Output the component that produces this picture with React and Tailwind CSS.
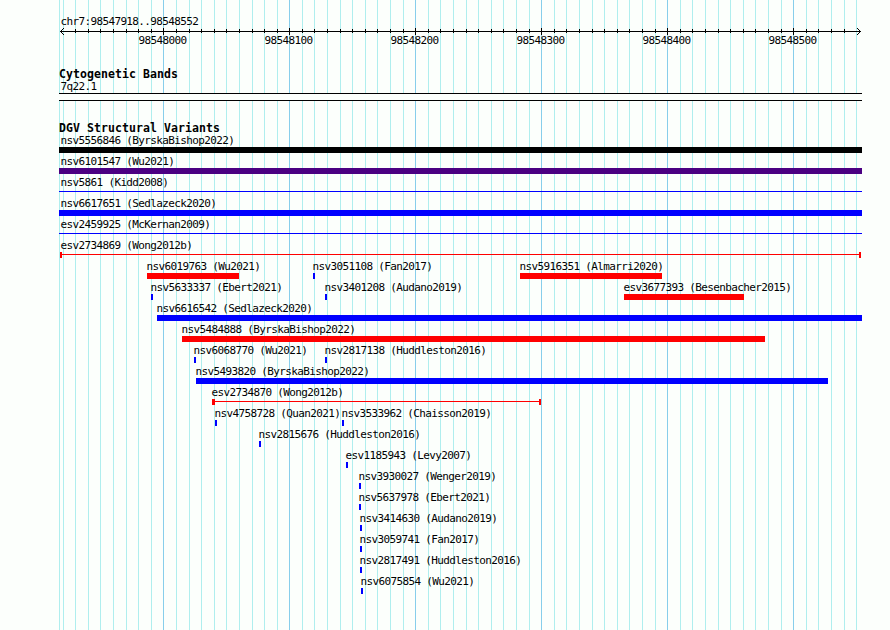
import React from "react";

const START = 59;
const END = 862;

const minorLines = [
    59, 63, 75, 88, 100, 113, 126, 138, 151, 176, 189, 201, 214, 226, 239, 252, 264, 277,
    302, 314, 327, 340, 352, 365, 377, 390, 403, 428, 440, 453, 466, 478, 491, 503, 516, 529,
    554, 566, 579, 592, 604, 617, 629, 642, 655, 680, 692, 705, 718, 730, 743, 755, 768, 781,
    806, 818, 831, 844, 856,
];

const majorLines = [
    { x: 163, label: "98548000" },
    { x: 289, label: "98548100" },
    { x: 415, label: "98548200" },
    { x: 541, label: "98548300" },
    { x: 667, label: "98548400" },
    { x: 793, label: "98548500" },
];

const rows = [
    [{ name: "nsv5556846 (ByrskaBishop2022)", from: 59, to: 862, color: "bg-black", labelX: 61 }],
    [{ name: "nsv6101547 (Wu2021)", from: 59, to: 862, color: "bg-[#4b0082]", labelX: 61 }],
    [{ name: "nsv5861 (Kidd2008)", from: 59, to: 862, color: "bg-[#0000ff]", type: "line", labelX: 61 }],
    [{ name: "nsv6617651 (Sedlazeck2020)", from: 59, to: 862, color: "bg-[#0000ff]", labelX: 61 }],
    [{ name: "esv2459925 (McKernan2009)", from: 59, to: 862, color: "bg-[#0000ff]", type: "line", labelX: 61 }],
    [{ name: "esv2734869 (Wong2012b)", from: 60, to: 861, color: "bg-[#ff0000]", type: "span", labelX: 61 }],
    [
        { name: "nsv6019763 (Wu2021)", from: 147, to: 239, color: "bg-[#ff0000]" },
        { name: "nsv3051108 (Fan2017)", from: 313, to: 315, color: "bg-[#0000ff]" },
        { name: "nsv5916351 (Almarri2020)", from: 520, to: 662, color: "bg-[#ff0000]" },
    ],
    [
        { name: "nsv5633337 (Ebert2021)", from: 151, to: 153, color: "bg-[#0000ff]" },
        { name: "nsv3401208 (Audano2019)", from: 325, to: 327, color: "bg-[#0000ff]" },
        { name: "esv3677393 (Besenbacher2015)", from: 624, to: 744, color: "bg-[#ff0000]" },
    ],
    [{ name: "nsv6616542 (Sedlazeck2020)", from: 157, to: 862, color: "bg-[#0000ff]" }],
    [{ name: "nsv5484888 (ByrskaBishop2022)", from: 182, to: 765, color: "bg-[#ff0000]" }],
    [
        { name: "nsv6068770 (Wu2021)", from: 194, to: 196, color: "bg-[#0000ff]" },
        { name: "nsv2817138 (Huddleston2016)", from: 325, to: 327, color: "bg-[#0000ff]" },
    ],
    [{ name: "nsv5493820 (ByrskaBishop2022)", from: 196, to: 828, color: "bg-[#0000ff]" }],
    [{ name: "esv2734870 (Wong2012b)", from: 212, to: 541, color: "bg-[#ff0000]", type: "span", capWidth: 3 }],
    [
        { name: "nsv4758728 (Quan2021)", from: 215, to: 217, color: "bg-[#0000ff]" },
        { name: "nsv3533962 (Chaisson2019)", from: 342, to: 344, color: "bg-[#0000ff]" },
    ],
    [{ name: "nsv2815676 (Huddleston2016)", from: 259, to: 261, color: "bg-[#0000ff]" }],
    [{ name: "esv1185943 (Levy2007)", from: 346, to: 348, color: "bg-[#0000ff]" }],
    [{ name: "nsv3930027 (Wenger2019)", from: 359, to: 361, color: "bg-[#0000ff]" }],
    [{ name: "nsv5637978 (Ebert2021)", from: 359, to: 361, color: "bg-[#0000ff]" }],
    [{ name: "nsv3414630 (Audano2019)", from: 360, to: 362, color: "bg-[#0000ff]" }],
    [{ name: "nsv3059741 (Fan2017)", from: 360, to: 362, color: "bg-[#0000ff]" }],
    [{ name: "nsv2817491 (Huddleston2016)", from: 360, to: 362, color: "bg-[#0000ff]" }],
    [{ name: "nsv6075854 (Wu2021)", from: 361, to: 363, color: "bg-[#0000ff]" }],
];

const GridLines = () => {
    return (
        <svg className="absolute inset-0" width="890" height="630" shapeRendering="crispEdges">
            {minorLines.map((x) => (
                <rect key={x} x={x} y="0" width="1" height="630" fill="#afeeee" />
            ))}
            {majorLines.map(({ x }) => (
                <rect key={x} x={x} y="0" width="1" height="630" fill="#87ceeb" />
            ))}
        </svg>
    );
};

const Label = ({ children }) => (
    <span className="block h-3 w-max text-[11px] leading-3 tracking-[-0.635px] whitespace-pre">{children}</span>
);

const Title = ({ children }) => (
    <h2 className="mb-px h-3 text-[11.5px] leading-3 font-bold tracking-[0.077px] whitespace-pre">{children}</h2>
);

const Ruler = () => {
    return (
        <div className="-mt-px">
            <svg className="block" width="803" height="8" viewBox="59 27 803 8" shapeRendering="crispEdges">
                <rect x="60" y="31" width="801" height="1" />
                {minorLines.filter((x) => x > 63 && x < 856).map((x) => (
                    <rect key={x} x={x} y="29" width="1" height="4" />
                ))}
                {majorLines.map(({ x }) => (
                    <rect key={x} x={x} y="28" width="1" height="7" />
                ))}
                <path d="M61 30h1v1h-1zM62 29h1v1h-1zM63 28h1v1h-1zM61 32h1v1h-1zM62 33h1v1h-1zM63 34h1v1h-1z" />
                <path d="M859 30h1v1h-1zM858 29h1v1h-1zM857 28h1v1h-1zM859 32h1v1h-1zM858 33h1v1h-1zM857 34h1v1h-1z" />
            </svg>
            <div className="grid">
                {majorLines.map(({ x, label }) => (
                    <div key={x} className="col-start-1 row-start-1" style={{ marginLeft: x - 24.5 - START }}>
                        <Label>{label}</Label>
                    </div>
                ))}
            </div>
        </div>
    );
};

const Glyph = ({ type, color, width, capWidth = 2 }) => {
    if (type === "line") {
        return (
            <div className="flex h-1.5 pt-0.5" style={{ width }}>
                <div className={`${color} h-px w-full`} />
            </div>
        );
    }
    if (type === "span") {
        return (
            <div className="flex h-1.5" style={{ width }}>
                <div className={`${color} h-1.5`} style={{ width: capWidth }} />
                <div className={`${color} mt-0.5 h-px flex-1`} />
                <div className={`${color} h-1.5 w-0.5`} />
            </div>
        );
    }
    return <div className={`${color} h-1.5`} style={{ width }} />;
};

const Feature = ({ feature }) => {
    const { name, from, to, color, type, capWidth, labelX = from } = feature;

    return (
        <div className="col-start-1 row-start-1">
            <div style={{ marginLeft: labelX - 0.5 - START }}>
                <Label>{name}</Label>
            </div>
            <div style={{ marginLeft: from - START }}>
                <Glyph type={type} color={color} width={to - from} capWidth={capWidth} />
            </div>
        </div>
    );
};

export default function App() {
    return (
        <div className="relative h-[630px] w-[890px] overflow-hidden bg-[#fcfffc] font-['DejaVu_Sans_Mono',monospace] text-black">
            <GridLines />
            <main className="relative ml-[59px] pt-4" style={{ width: END - START }}>
                <div className="ml-[1.5px]">
                    <Label>chr7:98547918..98548552</Label>
                </div>
                <Ruler />

                <section className="mt-[21px]">
                    <Title>Cytogenetic Bands</Title>
                    <div className="ml-[1.5px]">
                        <Label>7q22.1</Label>
                    </div>
                    <div className="h-2 border-y border-black bg-[#fcfffc]" />
                </section>

                <section className="mt-[21px]">
                    <Title>DGV Structural Variants</Title>
                    {rows.map((features, i) => (
                        <div key={i} className="grid h-[21px]">
                            {features.map((feature) => (
                                <Feature key={feature.name} feature={feature} />
                            ))}
                        </div>
                    ))}
                </section>
            </main>
        </div>
    );
}
